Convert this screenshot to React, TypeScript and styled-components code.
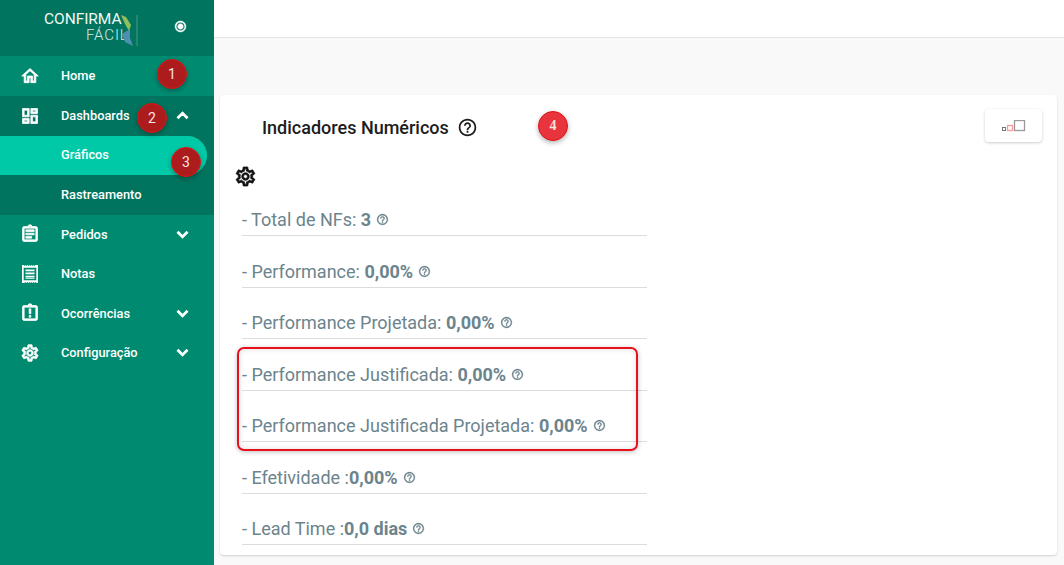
import styled, { createGlobalStyle } from "styled-components";
import {
  MdExpandLess,
  MdExpandMore,
  MdHelpOutline,
  MdOutlineAssignment,
  MdOutlineAssignmentLate,
  MdOutlineDashboard,
  MdOutlineHome,
  MdOutlineSettings,
  MdRadioButtonChecked,
} from "react-icons/md";
import { ReactNode } from "react";

const GlobalStyle = createGlobalStyle`
  html, body {
    margin: 0;
    padding: 0;
    height: 100%;
    overflow: hidden;
    background: #f9f9f9;
    font-family: Roboto, "Liberation Sans", sans-serif;
  }
  /* material icons carry an empty 24x24 path, keep it out of the thicker strokes */
  svg path[fill="none"] {
    stroke: none;
  }
`;

const Page = styled.div`
  position: relative;
  display: flex;
  width: 1064px;
  height: 565px;
  overflow: hidden;
`;

const Sidebar = styled.aside`
  width: 214px;
  flex-shrink: 0;
  background: #008b71;
  color: #fff;
  display: flex;
  flex-direction: column;
`;

const Brand = styled.div`
  height: 56px;
  background: #00745e;
  display: flex;
  align-items: center;
  padding-left: 44px;
  position: relative;
  svg.toggle {
    position: absolute;
    left: 174px;
    top: 20px;
    stroke: currentColor;
    stroke-width: 1;
  }
`;

const Logo = styled.div`
  position: relative;
  width: 94px;
  height: 42px;
  color: #f0f7f4;
`;

const LogoTop = styled.span`
  position: absolute;
  left: 0;
  top: 5px;
  font-size: 15.5px;
  line-height: 14px;
  letter-spacing: -0.05px;
  font-weight: 400;
`;

const LogoBottom = styled.span`
  position: absolute;
  left: 42px;
  top: 21px;
  font-size: 15px;
  line-height: 14px;
  letter-spacing: 0.9px;
  font-weight: 300;
  color: #d8e9e3;
`;

const LogoMark = styled.svg`
  position: absolute;
  left: 76px;
  top: 7px;
`;

const MenuRow = styled.div<{ $bg?: string; $height?: number; $pill?: boolean }>`
  height: ${(p) => p.$height ?? 39.5}px;
  flex-shrink: 0;
  display: flex;
  align-items: center;
  background: ${(p) => p.$bg ?? "transparent"};
  font-size: 12.8px;
  font-weight: 500;
  padding-bottom: ${(p) => (p.$pill ? 2 : 1)}px;
  box-sizing: border-box;
  position: relative;
  width: ${(p) => (p.$pill ? "207px" : "auto")};
  border-radius: ${(p) => (p.$pill ? "0 20px 20px 0" : "0")};
`;

const SubGroup = styled.div`
  background: #00745e;
`;

const IconSlot = styled.span`
  width: 61px;
  height: 20px;
  flex-shrink: 0;
  display: flex;
  justify-content: flex-start;
  padding-left: 20px;
  box-sizing: border-box;
  svg {
    stroke: currentColor;
    stroke-width: 0.9;
  }
`;

const Label = styled.span`
  flex: 1;
`;

const Chevron = styled.span`
  width: 26px;
  margin-right: 19px;
  display: flex;
  justify-content: center;
  svg {
    stroke: currentColor;
    stroke-width: 1.2;
  }
`;

const Main = styled.main`
  flex: 1;
  display: flex;
  flex-direction: column;
`;

const TopBar = styled.header`
  height: 37px;
  flex-shrink: 0;
  background: #fff;
  border-bottom: 1px solid #e4e4e4;
`;

const Card = styled.section`
  margin: 57px 7px 0 6px;
  height: 460px;
  background: #fff;
  border-radius: 4px;
  box-shadow: 0 1px 2px rgba(0, 0, 0, 0.16);
  display: flex;
  flex-direction: column;
`;

const CardHeader = styled.div`
  height: 70px;
  flex-shrink: 0;
  display: flex;
  align-items: flex-start;
  padding: 14px 15px 0 42px;
  box-sizing: border-box;
`;

const Title = styled.h2`
  margin: 8px 0 0;
  font-size: 18px;
  line-height: 21px;
  font-weight: 500;
  color: #1c1c1c;
  display: flex;
  align-items: center;
  gap: 8px;
  flex: 1;
`;

const SizeButton = styled.button`
  width: 57px;
  height: 33px;
  border: 0;
  padding: 0;
  background: #fff;
  border-radius: 4px;
  box-shadow: 0 1px 3px rgba(0, 0, 0, 0.2);
  display: flex;
  align-items: center;
  justify-content: center;
`;

const GearWrap = styled.div`
  height: 23px;
  padding-left: 14px;
  display: flex;
  color: #111;
  svg {
    stroke: currentColor;
    stroke-width: 0.7;
  }
`;

const List = styled.ul`
  list-style: none;
  margin: -3.5px 0 0 22px;
  padding: 0;
  width: 405px;
`;

const Row = styled.li`
  height: 51.5px;
  border-bottom: 1px solid #dcdcdc;
  display: flex;
  align-items: flex-end;
  gap: 5px;
  padding-bottom: 5px;
  box-sizing: border-box;
  font-size: 18px;
  line-height: 21px;
  color: #6c848c;
  white-space: pre;
  b {
    font-weight: 700;
  }
  svg {
    margin-bottom: 4px;
    stroke: currentColor;
    stroke-width: 0.6;
  }
`;

const Badge = styled.span<{ $x: number; $y: number; $bright?: boolean }>`
  position: absolute;
  left: ${(p) => p.$x}px;
  top: ${(p) => p.$y}px;
  width: 30px;
  height: 30px;
  border-radius: 50%;
  background: ${(p) => (p.$bright ? "#e8343c" : "#ad1c1c")};
  border: 1px solid #e01414;
  box-sizing: border-box;
  color: #f3e4e4;
  font-size: 14px;
  font-family: ${(p) => (p.$bright ? '"Liberation Serif", serif' : "Roboto, sans-serif")};
  font-weight: ${(p) => (p.$bright ? 700 : 400)};
  display: flex;
  align-items: center;
  justify-content: center;
  box-shadow: 0 2px 5px rgba(0, 0, 0, 0.3);
`;

const Highlight = styled.div`
  position: absolute;
  left: 237px;
  top: 347px;
  width: 401px;
  height: 104px;
  border: 2px solid #e8101c;
  border-radius: 7px;
  box-sizing: border-box;
  box-shadow: 0 1px 5px rgba(0, 0, 0, 0.25), inset 0 0 6px rgba(0, 0, 0, 0.12);
`;

const ReceiptIcon = () => (
  <svg width="20" height="20" viewBox="0 0 20 20" fill="none" style={{ strokeWidth: 0 }}>
    <path
      fill="#fff"
      d="M2 1h1.5l1 1 1-1 1 1 1-1 1 1 1-1 1 1 1-1 1 1 1-1 1 1 1-1H18v18h-1.5l-1-1-1 1-1-1-1 1-1-1-1 1-1-1-1 1-1-1-1 1-1-1-1 1H2V1zm1.7 2.7v12.6h12.6V3.7H3.7zM5.5 5.5h9v1.7h-9V5.5zm0 3.1h9v1.7h-9V8.6zm0 3.1h9v1.7h-9v-1.7zm0 2.6h9V15h-9v-.7z"
      fillRule="evenodd"
    />
  </svg>
);

type Item = { label: string; icon: ReactNode; chevron?: boolean };

const items: Item[] = [
  { label: "Pedidos", icon: <MdOutlineAssignment size={20} />, chevron: true },
  { label: "Notas", icon: <ReceiptIcon /> },
  { label: "Ocorrências", icon: <MdOutlineAssignmentLate size={20} />, chevron: true },
  { label: "Configuração", icon: <MdOutlineSettings size={20} />, chevron: true },
];

const rows = [
  { text: "- Total de NFs: ", value: "3" },
  { text: "- Performance: ", value: "0,00%" },
  { text: "- Performance Projetada: ", value: "0,00%" },
  { text: "- Performance Justificada: ", value: "0,00%" },
  { text: "- Performance Justificada Projetada: ", value: "0,00%" },
  { text: "- Efetividade :", value: "0,00%" },
  { text: "- Lead Time :", value: "0,0 dias" },
];

export default function App() {
  return (
    <Page>
      <GlobalStyle />
      <Sidebar>
        <Brand>
          <Logo>
            <LogoTop>CONFIRMA</LogoTop>
            <LogoBottom>FÁCIL</LogoBottom>
            <LogoMark width="20" height="34" viewBox="0 0 20 34">
              <path d="M1 1 L6 3 L11 11 L9 17 L5 10 Z" fill="#8fbf5a" />
              <path d="M2 20 L10 15 L10 24 L13 32 L5 28 Z" fill="#4d8fb0" />
              <path d="M17 1 V32" stroke="#5fa08c" strokeWidth="0.8" />
            </LogoMark>
          </Logo>
          <MdRadioButtonChecked className="toggle" size={13} />
        </Brand>
        <MenuRow $height={40}>
          <IconSlot>
            <MdOutlineHome size={20} />
          </IconSlot>
          <Label>Home</Label>
        </MenuRow>
        <SubGroup>
          <MenuRow $height={40}>
            <IconSlot>
              <MdOutlineDashboard size={20} />
            </IconSlot>
            <Label>Dashboards</Label>
            <Chevron>
              <MdExpandLess size={21} />
            </Chevron>
          </MenuRow>
          <MenuRow $bg="#00c9a7" $height={39} $pill>
            <IconSlot />
            <Label>Gráficos</Label>
          </MenuRow>
          <MenuRow $height={40}>
            <IconSlot />
            <Label>Rastreamento</Label>
          </MenuRow>
        </SubGroup>
        {items.map((item) => (
          <MenuRow key={item.label}>
            <IconSlot>{item.icon}</IconSlot>
            <Label>{item.label}</Label>
            {item.chevron ? (
              <Chevron>
                <MdExpandMore size={21} />
              </Chevron>
            ) : null}
          </MenuRow>
        ))}
      </Sidebar>
      <Main>
        <TopBar />
        <Card>
          <CardHeader>
            <Title>
              Indicadores Numéricos
              <MdHelpOutline size={21} />
            </Title>
            <SizeButton aria-label="tamanho">
              <svg width="24" height="12" viewBox="0 0 24 12">
                <rect x="0.5" y="7.5" width="3" height="3" fill="none" stroke="#777" />
                <rect x="5.5" y="5.5" width="5" height="5" fill="none" stroke="#ff9a9a" strokeWidth="1.3" />
                <rect x="12.5" y="0.5" width="10" height="10" fill="none" stroke="#999" strokeWidth="1.3" />
              </svg>
            </SizeButton>
          </CardHeader>
          <GearWrap>
            <MdOutlineSettings size={23} />
          </GearWrap>
          <List>
            {rows.map((row) => (
              <Row key={row.text}>
                <span>
                  {row.text}
                  <b>{row.value}</b>
                </span>
                <MdHelpOutline size={13} />
              </Row>
            ))}
          </List>
        </Card>
      </Main>
      <Highlight />
      <Badge $x={157} $y={59}>1</Badge>
      <Badge $x={137} $y={103}>2</Badge>
      <Badge $x={171} $y={147}>3</Badge>
      <Badge $x={538} $y={111} $bright>4</Badge>
    </Page>
  );
}
